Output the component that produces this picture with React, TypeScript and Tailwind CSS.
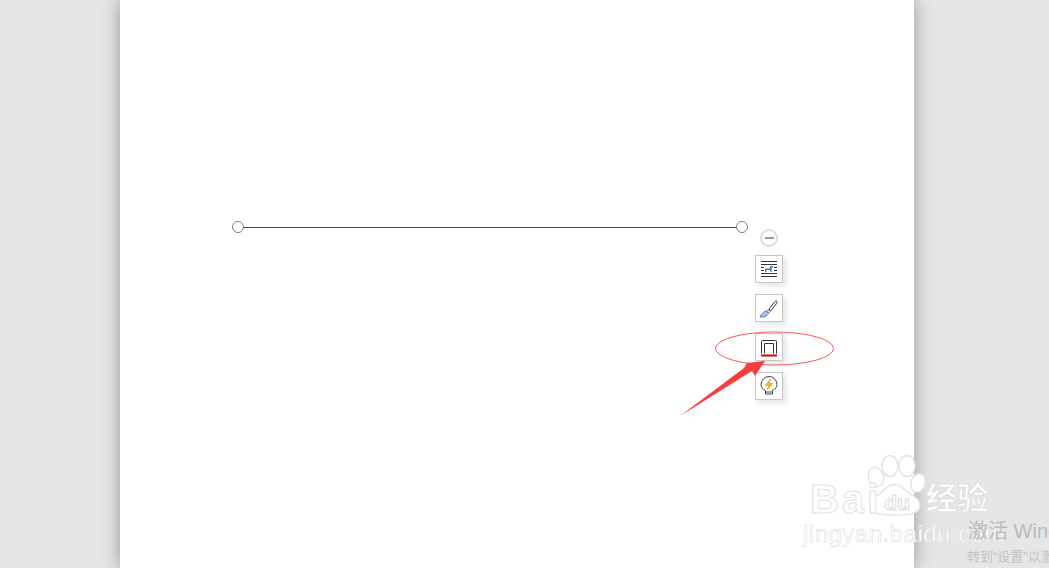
// Word shape-line page with layout toolbar, annotation and watermark
const font = "font-['Liberation_Sans','Noto_Sans_CJK_SC',sans-serif]"

const ToolButton = ({ children }: { children: React.ReactNode }) => (
    <div className="w-[28px] h-[28px] bg-white border border-[#c6c6c6] shadow-[3px_3px_5px_rgba(0,0,0,0.1)] flex items-center justify-center">
        {children}
    </div>
)

const Handle = () => (
    <div className="w-[12px] h-[12px] shrink-0 rounded-full bg-white border border-[#808080]" />
)

const LayoutIcon = () => (
    <svg width="18" height="18" viewBox="0 0 18 18">
        <path d="M1 1.500h16M1 4.500h16M1 13.500h16M1 16.500h16" stroke="#333" strokeWidth="1" fill="none" />
        <path d="M1 7.500h3M14 7.500h3M1 10.500h3M14 10.500h3" stroke="#333" strokeWidth="1" fill="none" />
        <path d="M5 12V8.500h4.500L10.500 6h2.500v1.500h-1L11.500 12h-1.300v-2H6.500v2z" fill="#4a7fd6" />
    </svg>
)

const BrushIcon = () => (
    <svg width="20" height="20" viewBox="0 0 20 20">
        <path d="M1 19c3.500.5 7-.5 8.500-3.500L7 13C4.500 13.500 2.500 16 1 19z" fill="#a9c4f2" stroke="#4a7fd6" strokeWidth="1" />
        <path d="M7.500 13l2.200 2.200 1.600-1.600-2.200-2.200z" fill="#dfe9fa" stroke="#4a7fd6" strokeWidth="1" />
        <path d="M10 11l6-7.500c.6-.6 1.600-.6 2 0 .4.500.3 1.200-.2 1.700l-6.200 7.800z" fill="#fff" stroke="#333" strokeWidth="1" />
    </svg>
)

const BorderIcon = () => (
    <svg width="20" height="20" viewBox="0 0 20 20" className="mt-px">
        <path d="M2.500 15.500V3.500q0-1 1-1h13q1 0 1 1v12" stroke="#333" strokeWidth="1" fill="none" />
        <path d="M5.500 15.500V5.500h9v10" stroke="#333" strokeWidth="1" fill="none" />
        <path d="M2 17.500h16" stroke="#e00000" strokeWidth="2" fill="none" />
    </svg>
)

const BulbIcon = () => (
    <svg width="20" height="22" viewBox="0 0 20 22">
        <path d="M6.500 15.500C3.500 14 2 12 2 9.500a8 8 0 0 1 16 0c0 2.500-1.500 4.500-4.500 6V19h-7z" fill="#fff" stroke="#444" strokeWidth="1" />
        <path d="M6.500 17h7" stroke="#444" strokeWidth="1" />
        <path d="M11.500 4L6 10.500h3.500L8 15l6-6.500h-3.500z" fill="#f5b731" stroke="#d99a1e" strokeWidth="0.5" />
    </svg>
)

const PawMark = () => (
    <svg className="absolute left-[62px] top-0" width="62" height="62" viewBox="0 0 62 62" fill="#fff" stroke="#e4e4e4" strokeWidth="1.500">
        <ellipse cx="11" cy="22" rx="7.500" ry="10" transform="rotate(-20 11 22)" />
        <ellipse cx="25" cy="11" rx="8" ry="10.500" />
        <ellipse cx="42" cy="11" rx="8" ry="10.500" />
        <ellipse cx="53" cy="28" rx="7" ry="9.500" transform="rotate(20 53 28)" />
        <path d="M5 50c0-8 10-10 15-16 5-6 14-6 19 0 5 6 16 8 16 16 0 9-11 10-25 10S5 59 5 50z" />
    </svg>
)

const App = () => {
    return (
        <div className={`relative w-[1049px] h-[568px] overflow-hidden bg-[#e6e6e6] ${font}`}>
            {/* page */}
            <div className="relative ml-[120px] w-[794px] h-[568px] bg-white shadow-[0_0_18px_rgba(0,0,0,0.35)]">
                {/* selected line */}
                <div className="absolute left-[112px] top-[221px] w-[516px] flex items-center">
                    <Handle />
                    <div className="flex-1 h-px bg-[#e00000]" />
                    <Handle />
                </div>

                {/* layout toolbar */}
                <div className="absolute left-[635px] top-[229px] flex flex-col items-center gap-[11px]">
                    <div className="flex flex-col items-center gap-[8px]">
                        <div className="w-[18px] h-[18px] rounded-full bg-white border-2 border-[#dcdcdc] flex items-center justify-center">
                            <div className="w-[9px] h-[2px] bg-[#999999]" />
                        </div>
                        <ToolButton><LayoutIcon /></ToolButton>
                    </div>
                    <ToolButton><BrushIcon /></ToolButton>
                    <ToolButton><BorderIcon /></ToolButton>
                    <ToolButton><BulbIcon /></ToolButton>
                </div>
            </div>

            {/* annotation */}
            <svg className="absolute left-0 top-0" width="1049" height="568">
                <ellipse cx="774.500" cy="348.500" rx="59" ry="16.500" fill="none" stroke="#f65a5a" strokeWidth="1" />
                <polygon points="680,416 744,368 747,363 765,361 755,376 752,371" fill="#f73e3e" />
            </svg>

            {/* watermark */}
            <div className="absolute left-[803px] top-[455px] w-[200px] whitespace-nowrap">
                <PawMark />
                <div className="relative flex items-start pt-[22px] pl-[7px]">
                    <div className="text-[40px] leading-[44px] font-bold tracking-[3px] text-white [-webkit-text-stroke:1px_#e2e2e2]">Bai</div>
                    <div className="ml-[3px] mt-[14px] text-[21px] leading-[24px] font-bold text-white [-webkit-text-stroke:1px_#dcdcdc]">du</div>
                    <div className="ml-[16px] mt-[4px] text-[31px] leading-[36px] font-bold text-white [-webkit-text-stroke:1px_#e0e0e0]">经验</div>
                </div>
                <div className="relative -mt-px text-[24px] leading-[28px] tracking-[0.5px] text-white [-webkit-text-stroke:0.6px_#e0e0e0]">jingyan.baidu.com</div>
            </div>

            {/* windows activation notice */}
            <div className="absolute left-[967px] top-[520px] flex flex-col gap-[7px] whitespace-nowrap">
                <div className="pl-px text-[20px] leading-[22px] text-[#bcbcbc]">激活 Windows</div>
                <div className="text-[13px] leading-[16px] text-[#c4c4c4]">转到“设置”以激活 Windows。</div>
            </div>
        </div>
    )
}

export default App
